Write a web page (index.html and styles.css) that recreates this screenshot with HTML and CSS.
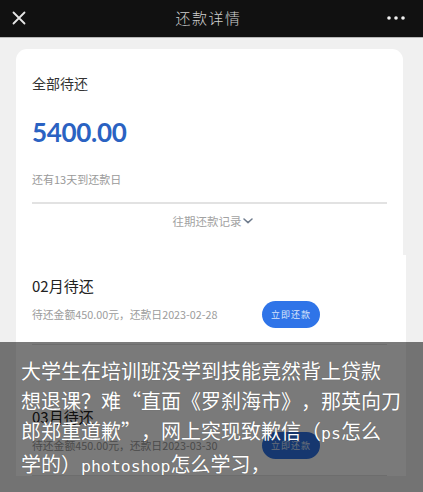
FILE: index.html
```html
<!DOCTYPE html>
<html lang="zh-CN">
<head>
<meta charset="utf-8">
<title>还款详情</title>
<link rel="stylesheet" href="styles.css">
</head>
<body>
<header class="topbar">
  <div class="tb-left">
    <svg class="icon-close" width="14" height="14" viewBox="0 0 14 14"><path d="M1.5 1.5 L12.5 12.5 M12.5 1.5 L1.5 12.5" stroke="#e6e6e6" stroke-width="1.8" stroke-linecap="round" fill="none"/></svg>
  </div>
  <div class="tb-title">还款详情</div>
  <div class="tb-right">
    <svg class="icon-more" width="18" height="4" viewBox="0 0 18 4"><circle cx="2" cy="2" r="1.8" fill="#f2f2f2"/><circle cx="9" cy="2" r="1.8" fill="#f2f2f2"/><circle cx="16" cy="2" r="1.8" fill="#f2f2f2"/></svg>
  </div>
</header>

<main class="page">
  <section class="card summary">
    <div class="label">全部待还</div>
    <div class="amount">5400.00</div>
    <div class="hint">还有13天到还款日</div>
    <div class="divider"></div>
    <div class="history">往期还款记录<svg class="chev" width="10" height="6" viewBox="0 0 10 6"><path d="M1 1 L5 4.6 L9 1" stroke="#6d7a8c" stroke-width="1.5" fill="none" stroke-linecap="round" stroke-linejoin="round"/></svg></div>
  </section>

  <section class="card list">
    <div class="item">
      <div class="item-title">02月待还</div>
      <div class="item-row">
        <span class="item-detail">待还金额450.00元，还款日2023-02-28</span>
        <span class="pay-btn">立即还款</span>
      </div>
    </div>
    <div class="item">
      <div class="item-title">03月待还</div>
      <div class="item-row">
        <span class="item-detail">待还金额450.00元，还款日2023-03-30</span>
        <span class="pay-btn">立即还款</span>
      </div>
    </div>
  </section>
</main>

<div class="overlay">
  <p class="overlay-text">大学生在培训班没学到技能竟然背上贷款<br>想退课？难“直面《罗刹海市》，那英向刀<br>郎郑重道歉”，网上突现致歉信（<span class="latin">ps</span>怎么<br>学的）<span class="latin">photoshop</span>怎么学习，</p>
</div>
</body>
</html>
```

FILE: styles.css
```css
* { box-sizing: border-box; }

html, body {
  margin: 0;
  padding: 0;
}

body {
  width: 423px;
  height: 492px;
  overflow: hidden;
  position: relative;
  background: #f0f0f0;
  font-family: "Noto Sans CJK SC", "Noto Sans", sans-serif;
}

.topbar {
  height: 38px;
  background: #111111;
  border-bottom: 1px solid #b9b9b9;
  display: grid;
  grid-template-columns: 1fr auto 1fr;
  align-items: center;
  padding: 0 18px 2px 12px;
}

.tb-left { display: flex; align-items: center; }
.tb-right { display: flex; justify-content: flex-end; align-items: center; }
.icon-close, .icon-more { display: block; }

.tb-title {
  color: #cfcfcf;
  font-size: 15px;
  letter-spacing: 1.5px;
  font-weight: 300;
  line-height: 20px;
}

.page {
  padding: 11px 0 0 16px;
}

.card {
  background: #ffffff;
}

.summary {
  width: 387px;
  border-radius: 11px 11px 0 0;
  padding: 24px 16px 26px 16px;
}

.label {
  font-size: 14px;
  line-height: 20px;
  color: #333333;
}

.amount {
  margin-top: 23px;
  font-family: "Lato", "Noto Sans", sans-serif;
  font-weight: 700;
  font-size: 26px;
  line-height: 32px;
  color: #2a62c2;
  letter-spacing: -0.3px;
}

.hint {
  margin-top: 23px;
  font-size: 11px;
  line-height: 16px;
  color: #9a9a9a;
}

.divider {
  margin-top: 15px;
  height: 1.5px;
  background: #e2e2e2;
}

.history {
  margin-top: 9px;
  font-size: 11.5px;
  line-height: 16px;
  color: #a2a2a2;
  display: flex;
  justify-content: center;
  align-items: center;
  gap: 1px;
  padding-left: 6px;
}

.chev { display: block; margin-top: 1px; }

.list {
  width: 390px;
  padding: 20px 19px 0 16px;
  display: flex;
  flex-direction: column;
  gap: 61px;
}

.item {
  padding-bottom: 16px;
  border-bottom: 1.5px solid #e4e4e4;
}

.item-title {
  font-size: 15px;
  line-height: 22px;
  color: #222222;
}

.item-row {
  margin-top: 4px;
  display: flex;
  align-items: center;
}

.item-detail {
  flex: 0 0 230px;
  font-size: 10.8px;
  line-height: 16px;
  color: #9c9c9c;
}

.pay-btn {
  width: 58px;
  height: 27px;
  border-radius: 14px;
  background: #2f74e8;
  color: #d9e4fb;
  font-size: 9px;
  letter-spacing: 1px;
  display: flex;
  align-items: center;
  justify-content: center;
}

.overlay {
  position: absolute;
  left: 0;
  top: 342px;
  width: 423px;
  height: 150px;
  background: rgba(0, 0, 0, 0.52);
  padding: 14px 0 0 21px;
}

.overlay-text {
  margin: 0;
  font-size: 20px;
  line-height: 30px;
  color: #ffffff;
  text-shadow: 0 0 1px rgba(0,0,0,0.3);
  white-space: nowrap;
  text-spacing-trim: space-all;
}

.latin {
  font-family: "DejaVu Sans Mono", monospace;
  font-size: 16.5px;
}
```
